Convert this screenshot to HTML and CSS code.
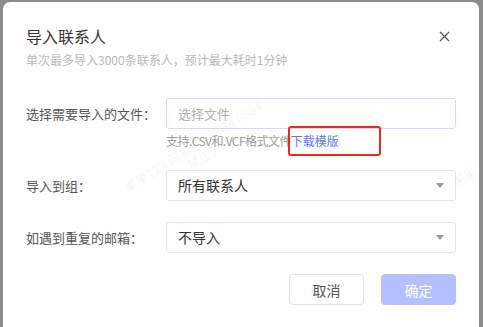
FILE: index.html
```html
<!DOCTYPE html>
<html lang="zh-CN">
<head>
    <meta charset="UTF-8">
    <title>导入联系人</title>
    <link rel="stylesheet" href="styles.css">
</head>
<body>

    <!-- Import contacts dialog -->
    <div class="dialog">
        <div class="dialog-head">
            <h1 class="title">导入联系人</h1>
            <p class="subtitle">单次最多导入3000条联系人，预计最大耗时1分钟</p>
            <span class="close">
                <svg width="11" height="11" viewBox="0 0 11 11"><path d="M1 1L10 10M10 1L1 10" stroke="#555" stroke-width="1.2" fill="none"/></svg>
            </span>
        </div>

        <div class="form">
            <div class="row">
                <label class="label">选择需要导入的文件：</label>
                <div class="field">
                    <div class="input is-file">选择文件</div>
                    <p class="help"><span class="help-text">支持.CSV和.VCF格式文件</span><a class="link" href="#">下载模版</a></p>
                </div>
            </div>

            <div class="row">
                <label class="label">导入到组：</label>
                <div class="field">
                    <div class="input select">所有联系人<span class="caret"></span></div>
                </div>
            </div>

            <div class="row">
                <label class="label">如遇到重复的邮箱：</label>
                <div class="field">
                    <div class="input select">不导入<span class="caret"></span></div>
                </div>
            </div>
        </div>

        <div class="footer">
            <button class="btn btn-cancel">取消</button>
            <button class="btn btn-ok">确定</button>
        </div>

        <!-- watermark -->
        <span class="mark mark-1">果果123 网易企业邮箱 6384</span>
        <span class="mark mark-2">禁止外传</span>
        <span class="mark mark-3">果果</span>
    </div>

</body>
</html>
```

FILE: styles.css
```css
/* Basic reset */
* {
    margin: 0;
    padding: 0;
    box-sizing: border-box;
}

body {
    width: 483px;
    height: 327px;
    overflow: hidden;
    background: #8d8d8d;
    font-family: "Noto Sans CJK SC", "Noto Sans", sans-serif;
    color: #333;
}

/* Dialog box */
.dialog {
    position: relative;
    width: 476px;
    height: 340px;
    margin: 2px 0 0 3px;
    padding: 23px 23px 0 23px;
    background: #fff;
    border-radius: 7px;
    overflow: hidden;
}

.dialog-head {
    position: relative;
}

.title {
    font-size: 16px;
    font-weight: normal;
    line-height: 22px;
    color: #333;
}

.subtitle {
    margin-top: 4px;
    font-size: 12px;
    line-height: 18px;
    color: #b8b8b8;
}

.close {
    position: absolute;
    top: 6px;
    right: 6px;
    width: 11px;
    height: 11px;
    display: flex;
}

/* Form rows */
.form {
    margin-top: 29px;
}

.row {
    display: flex;
    margin-bottom: 21px;
}

.label {
    width: 140px;
    flex-shrink: 0;
    height: 31px;
    line-height: 31px;
    font-size: 13px;
    color: #555;
}

.field {
    width: 290px;
}

.input {
    position: relative;
    height: 31px;
    padding-left: 11px;
    line-height: 29px;
    font-size: 14px;
    color: #333;
    border: 1px solid #e6e6e6;
    border-radius: 3px;
}

.input.is-file {
    font-size: 13px;
    color: #b0b0b0;
    border-color: #d6dcf4;
}

.caret {
    position: absolute;
    right: 11px;
    top: 12px;
    width: 0;
    height: 0;
    border-left: 4px solid transparent;
    border-right: 4px solid transparent;
    border-top: 5px solid #9a9a9a;
}

.help {
    margin-top: 4px;
    font-size: 12px;
    line-height: 16px;
    color: #9c9c9c;
}

.help-text {
    letter-spacing: -0.55px;
}

.link {
    position: relative;
    color: #5b79f2;
    text-decoration: none;
}

/* red highlight box around the template link */
.link::after {
    content: '';
    position: absolute;
    left: -3px;
    top: -6px;
    width: 89px;
    height: 26px;
    border: 2px solid #ea2a22;
    border-radius: 3px;
}

/* Footer buttons */
.footer {
    display: flex;
    justify-content: flex-end;
    gap: 17px;
    margin-top: 10px;
}

.btn {
    width: 75px;
    height: 31px;
    font-family: inherit;
    font-size: 14px;
    border-radius: 4px;
    border: 1px solid #e2e2e2;
    background: #fff;
    color: #555;
}

.btn-ok {
    border-color: #b4c0ff;
    background: #b4c0ff;
    color: #fff;
}

/* Watermark text */
.mark {
    position: absolute;
    font-size: 13px;
    color: rgba(0, 0, 0, 0.06);
    white-space: nowrap;
    transform: rotate(-32deg);
    transform-origin: left bottom;
    pointer-events: none;
}

.mark-1 {
    left: 127px;
    top: 176px;
}

.mark-2 {
    left: 190px;
    top: 153px;
}

.mark-3 {
    left: 455px;
    top: 170px;
}
```
